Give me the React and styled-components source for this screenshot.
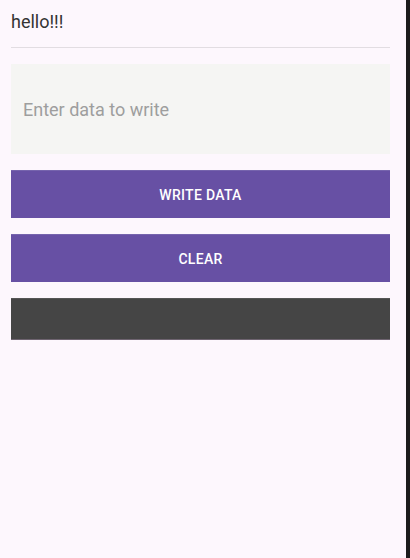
import React from "react";
import styled, { createGlobalStyle } from "styled-components";

const Global = createGlobalStyle`
  html, body { margin: 0; padding: 0; background: #fdf7fd; }
  body { font-family: Roboto, "Noto Sans", sans-serif; }
`;

const Screen = styled.div`
  display: flex;
  width: 410px;
  height: 558px;
  background: #fdf7fd;
`;

const Main = styled.div`
  flex: 1;
  display: flex;
  flex-direction: column;
  padding: 0 16px 0 11px;
`;

const Edge = styled.div`
  width: 4px;
  background: #1c1c1c;
`;

const Header = styled.div`
  display: flex;
  align-items: center;
  border-bottom: 1px solid #e2dde2;
  font-size: 18px;
  color: #333333;
  box-sizing: border-box;
  height: 48px;
`;

const Title = styled.span`
  margin-top: -4px;
`;

const Stack = styled.div`
  display: flex;
  flex-direction: column;
  gap: 16px;
  margin-top: 16px;
`;

const Input = styled.input`
  height: 90px;
  box-sizing: border-box;
  border: none;
  outline: none;
  background: #f5f5f3;
  padding: 0 12px;
  font-family: Roboto, sans-serif;
  font-size: 18px;
  color: #333;
  &::placeholder { color: #9e9e9e; }
`;

const Button = styled.button`
  height: 48px;
  border: none;
  border-top: 1px solid #7664ad;
  background: #6750a4;
  color: #fff;
  font-family: Roboto, sans-serif;
  font-weight: 500;
  font-size: 14px;
  letter-spacing: 0.3px;
  padding: 0;
  display: flex;
  align-items: center;
  justify-content: center;
`;

const Panel = styled.div`
  height: 42px;
  box-sizing: border-box;
  background: #454545;
  border-top: 1px solid #555;
  border-bottom: 1px solid #6e6470;
`;

export default function App() {
  return (
    <>
      <Global />
      <Screen>
        <Main>
          <Header><Title>hello!!!</Title></Header>
          <Stack>
            <Input placeholder="Enter data to write" />
            <Button>WRITE DATA</Button>
            <Button>CLEAR</Button>
            <Panel />
          </Stack>
        </Main>
        <Edge />
      </Screen>
    </>
  );
}
